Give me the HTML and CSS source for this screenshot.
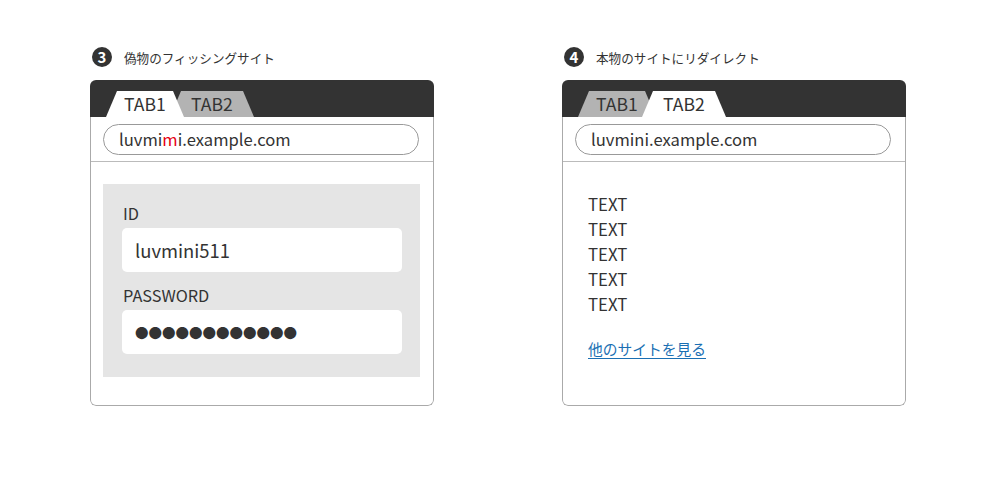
FILE: index.html
```html
<!DOCTYPE html>
<html lang="ja">
<head>
<meta charset="utf-8">
<title>Phishing example</title>
<link rel="stylesheet" href="styles.css">
</head>
<body>
<div class="page">
  <section class="panel">
    <div class="title"><span class="num">3</span><span class="title-text">偽物のフィッシングサイト</span></div>
    <div class="browser">
      <div class="tabbar">
        <div class="tab tab1 active">TAB1</div>
        <div class="tab tab2">TAB2</div>
      </div>
      <div class="body">
        <div class="addr-row"><div class="addr">luvmi<span class="bad">m</span>i.example.com</div></div>
        <div class="content content-form">
          <div class="form">
            <div class="label">ID</div>
            <div class="input">luvmini511</div>
            <div class="label label-pw">PASSWORD</div>
            <div class="input dots">●●●●●●●●●●●●</div>
          </div>
        </div>
      </div>
    </div>
  </section>
  <section class="panel">
    <div class="title"><span class="num">4</span><span class="title-text">本物のサイトにリダイレクト</span></div>
    <div class="browser">
      <div class="tabbar">
        <div class="tab tab1">TAB1</div>
        <div class="tab tab2 active">TAB2</div>
      </div>
      <div class="body">
        <div class="addr-row"><div class="addr">luvmini.example.com</div></div>
        <div class="content content-text">
          <div class="line">TEXT</div>
          <div class="line">TEXT</div>
          <div class="line">TEXT</div>
          <div class="line">TEXT</div>
          <div class="line">TEXT</div>
          <a class="link" href="#">他のサイトを見る</a>
        </div>
      </div>
    </div>
  </section>
</div>
</body>
</html>
```

FILE: styles.css
```css
* { box-sizing: border-box; }
html, body { margin: 0; padding: 0; background: #fff; }
body {
  font-family: "Noto Sans CJK JP", "Noto Sans", sans-serif;
  color: #333;
  width: 1000px;
  height: 481px;
  overflow: hidden;
}
.page {
  display: flex;
  gap: 128px;
  padding: 47px 0 0 90px;
}
.panel {
  width: 344px;
  display: flex;
  flex-direction: column;
}
.title {
  display: flex;
  align-items: center;
  height: 20px;
  margin-bottom: 13px;
  padding-left: 2px;
}
.num {
  width: 20px;
  height: 20px;
  border-radius: 50%;
  background: #333;
  color: #fff;
  font-weight: bold;
  font-size: 15px;
  line-height: 20px;
  text-align: center;
}
.title-text {
  margin-left: 12px;
  font-size: 12.6px;
  color: #333;
}
.browser {
  flex: 1;
  display: flex;
  flex-direction: column;
  border-radius: 6px;
  overflow: hidden;
}
.tabbar {
  background: #333;
  height: 37px;
  display: flex;
  align-items: flex-end;
  padding-left: 16px;
}
.tab {
  position: relative;
  height: 26px;
  line-height: 26px;
  font-size: 17.6px;
  text-align: center;
  background: #b3b3b3;
  color: #333;
  clip-path: polygon(11px 0, calc(100% - 11px) 0, 100% 100%, 0 100%);
}
.tab1 { width: 78px; z-index: 1; }
.tab2 { width: 84px; margin-left: -14px; z-index: 1; }
.tab.active { background: #fff; z-index: 2; }
.body {
  flex: 1;
  display: flex;
  flex-direction: column;
  border: 1px solid #aaa;
  border-top: none;
  border-radius: 0 0 6px 6px;
  background: #fff;
}
.addr-row {
  padding: 7px 14px 6px 12px;
  border-bottom: 1px solid #bbb;
}
.addr {
  height: 31px;
  border: 1px solid #999;
  border-radius: 16px;
  padding-left: 15px;
  font-size: 16.6px;
  line-height: 29px;
  color: #333;
}
.bad { color: #e60012; }
.content-form {
  padding: 22px 13px 28px 12px;
}
.form {
  background: #e5e5e5;
  padding: 20px 18px 23px 19px;
}
.label {
  font-size: 16.3px;
  line-height: 18px;
  padding-left: 1px;
  margin-bottom: 6px;
}
.label-pw { margin-top: 14px; }
.input {
  height: 44px;
  background: #fff;
  border-radius: 5px;
  padding-left: 13px;
  font-size: 18.4px;
  line-height: 44px;
  color: #333;
}
.dots {
  font-size: 13.5px;
  letter-spacing: 0;
}
.content-text {
  padding: 30px 25px 0 25px;
  display: flex;
  flex-direction: column;
  align-items: flex-start;
}
.line {
  font-size: 16.8px;
  line-height: 25px;
}
.link {
  margin-top: 20px;
  font-size: 14.75px;
  line-height: 24px;
  color: #1a6fb3;
  text-decoration: underline;
  text-underline-offset: 3px;
}
```
